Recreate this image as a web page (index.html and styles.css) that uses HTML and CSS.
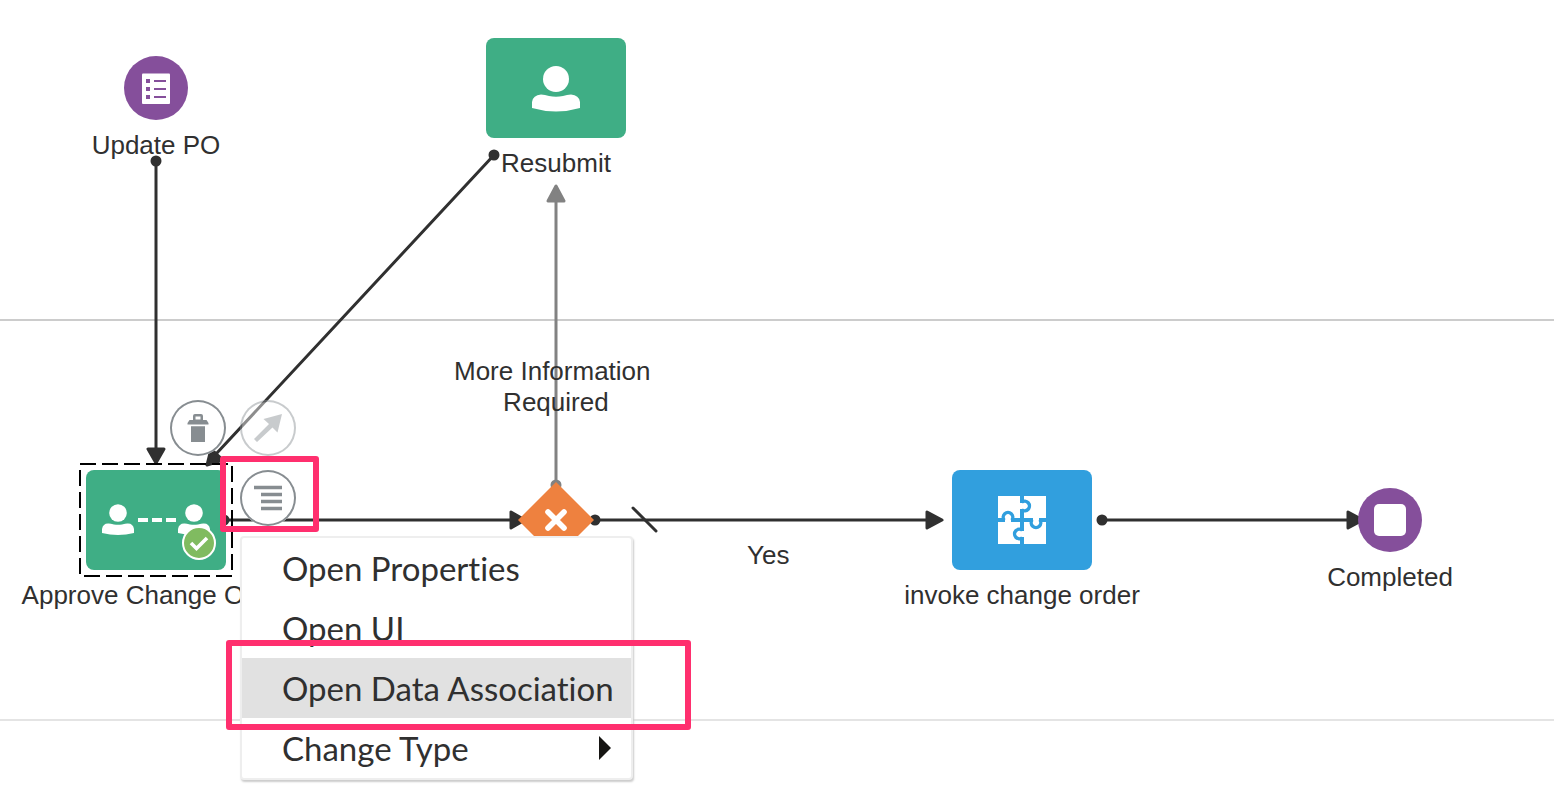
FILE: index.html
```html
<!DOCTYPE html>
<html lang="en">
<head>
<meta charset="utf-8">
<title>Process flow</title>
<link rel="stylesheet" href="styles.css">
</head>
<body>
<main class="canvas">
  <div class="lanes"><div class="lane lane-first"></div><div class="lane lane-second"></div></div>

  <svg class="connectors" aria-hidden="true">
    <g class="flow">
      <path d="M156 161V450M494 155L216 454M224 520H512M595 520H928M1102 520H1350"/>
      <path d="M633 508L656 531"/>
      <g class="ends">
        <circle cx="156" cy="161" r="4"/><circle cx="494" cy="155" r="4"/><circle cx="224" cy="520" r="4"/><circle cx="595" cy="520" r="4"/><circle cx="1102" cy="520" r="4"/>
        <path d="M148 449H164L156 463ZM511 512V528L525 520ZM927 512V528L942 520ZM1348 512V528L1363 520ZM207 465L211 449L223 460Z"/>
      </g>
    </g>
    <g class="flow muted">
      <path d="M556 486V200"/>
      <g class="ends"><circle cx="556" cy="485" r="4"/><path d="M548 201H564L556 186Z"/></g>
    </g>
  </svg>

  <section class="node update">
    <svg class="event" viewBox="0 0 64 64" aria-hidden="true"><circle cx="32" cy="32" r="32" fill="#854f9b"/><rect x="18" y="17.5" width="28" height="30.5" rx="1" fill="#fff"/><path d="M22 23h4v4h-4zM22 31h4v4h-4zM22 39h4v4h-4zM30 24h12v2H30zM30 32h12v2H30zM30 40h12v2H30z" fill="#854f9b"/></svg>
    <span>Update PO</span>
  </section>
  <section class="node resubmit">
    <div class="task"><svg width="48" height="48" viewBox="0 0 48 48" fill="#fff" aria-hidden="true"><circle cx="24" cy="15" r="13"/><path d="M0 44V38Q1 31 9 30.5Q13 30.500 17 32Q24 33.500 31 32Q35 30.500 39 30.500Q47 31 48 38V44Q24 51 0 44Z"/></svg></div>
    <span>Resubmit</span>
  </section>
  <section class="node approve">
    <div class="task"><svg width="140" height="100" viewBox="0 0 140 100" aria-hidden="true"><g fill="#fff"><circle cx="32" cy="43" r="8.8"/><path id="body" d="M16 63V59Q17 53.500 22 53.500Q24 53.300 28 54.500Q32 55 36 54.500Q40 53.300 42 53.500Q47 53.500 48 59V63Q32 67 16 63Z"/><circle cx="108" cy="43" r="8.8"/><use href="#body" x="76"/><path d="M52 48h10v4H52zM66 48h10v4H66zM80 48h10v4H80z"/></g><circle cx="113" cy="73" r="16" fill="#80bb60" stroke="#fff" stroke-width="2"/><path d="M105 73L110.500 78.500L121 68" fill="none" stroke="#fff" stroke-width="3.6"/></svg></div>
    <span>Approve Change Order</span>
  </section>
  <section class="node gateway"><svg width="76" height="76" viewBox="0 0 76 76" aria-hidden="true"><path d="M38 0L76 38L38 76L0 38Z" fill="#ee813f"/><path d="M30 30L46 46M46 30L30 46" stroke="#fff" stroke-width="5.6" stroke-linecap="round"/></svg></section>
  <section class="node invoke">
    <div class="task"><svg width="48" height="48" viewBox="0 0 48 48" aria-hidden="true"><path d="M0 0H48V48H0Z" fill="#fff"/><g fill="none" stroke="#319fde"><g id="arm"><path d="M24 0V7M24 13V24" stroke-width="4"/><path d="M23.700 6.200A4.800 4.800 0 1 1 23.700 13.800" stroke-width="3.4"/></g><use href="#arm" transform="rotate(90 24 24)"/><use href="#arm" transform="rotate(180 24 24)"/><use href="#arm" transform="rotate(270 24 24)"/></g></svg></div>
    <span>invoke change order</span>
  </section>
  <section class="node completed">
    <svg class="event" viewBox="0 0 64 64" aria-hidden="true"><circle cx="32" cy="32" r="32" fill="#854f9b"/><rect x="16" y="16" width="32" height="32" rx="5" fill="#fff"/></svg>
    <span>Completed</span>
  </section>

  <p class="flow-label more">More Information 
Required</p>
  <p class="flow-label yes">Yes</p>

  <svg class="selection" width="154" height="114" viewBox="0 0 154 114" aria-hidden="true"><path d="M1 1H153V113H1Z" fill="none" stroke="#000" stroke-width="2" stroke-dasharray="16 6"/></svg>

  <div class="tools">
    <button class="tool" type="button" aria-label="Delete"><svg viewBox="0 0 56 56"><path d="M17.500 24.500V23L19.500 20H23V16Q23 14 25 14H31Q33 14 33 16V20H36.500L38.500 23V24.500ZM25.500 19.500H30.500V16.500H25.500ZM21 26.300H35V42H21Z" fill="#878d91" fill-rule="evenodd"/></svg></button>
    <button class="tool" type="button" aria-label="Connect" disabled><svg viewBox="0 0 56 56"><path d="M42 14L37.500 32.500L32.500 27.500L17 42L14 39L29 24L23.500 19Z" fill="#878d91"/></svg></button>
    <button class="tool tool-menu" type="button" aria-label="Open menu" aria-expanded="true"><svg viewBox="0 0 56 56"><path d="M14 15.700H42V19.300H14ZM21 22.700H42V26.300H21ZM21 29.700H42V33.300H21ZM21 36.700H42V40.300H21Z" fill="#878d91"/></svg></button>
  </div>

  <nav class="menu" aria-label="Activity">
    <button type="button">Open Properties</button>
    <button type="button">Open UI</button>
    <button type="button" class="active">Open Data Association</button>
    <button type="button">Change Type<svg width="12" height="24" viewBox="0 0 12 24" aria-hidden="true"><path d="M0 0L12 12L0 24Z" fill="#161513"/></svg></button>
  </nav>
  <div class="mark mark-tool"></div>
  <div class="mark mark-item"></div>
</main>
</body>
</html>
```
FILE: styles.css
```css
* { box-sizing: border-box; }
body { margin: 0; background: #fff; color: #303030; font-family: "Liberation Sans", Arial, sans-serif; font-size: 26px; line-height: 30px; }
.canvas { position: relative; min-height: 100vh; overflow: hidden; }
.lane { border-bottom: 2px solid #ccc; }
.lane-first { height: 321px; }
.lane-second { height: 400px; border-color: #e4e4e4; }

.connectors { position: absolute; inset: 0; width: 100%; height: 100%; }
.flow { fill: none; stroke: #303030; stroke-width: 3px; stroke-linecap: round; }
.muted { stroke: #828282; }
.ends { fill: #303030; stroke-width: 3px; stroke-linejoin: round; }
.muted .ends { fill: #828282; }

.node { position: absolute; display: flex; flex-direction: column; align-items: center; gap: 10px; width: 280px; white-space: nowrap; }
.event { width: 64px; height: 64px; }
.task { display: flex; align-items: center; justify-content: center; width: 140px; height: 100px; border-radius: 8px; background: #3fae85; }
.update { left: 16px; top: 56px; }
.resubmit { left: 416px; top: 38px; }
.approve { left: 16px; top: 470px; }
.gateway { left: 416px; top: 482px; }
.invoke { left: 882px; top: 470px; }
.invoke .task { background: #319fde; }
.completed { left: 1250px; top: 488px; }

.flow-label { position: absolute; margin: 0; line-height: 31px; text-align: center; white-space: pre; }
.more { left: 454px; top: 356px; }
.yes { left: 747px; top: 540px; }
.selection { position: absolute; left: 79px; top: 463px; }

.tools { position: absolute; left: 170px; top: 400px; display: grid; grid-template-columns: 56px 56px; gap: 14px; }
.tool { width: 56px; height: 56px; padding: 0; border: 0; border-radius: 50%; background: #fff; box-shadow: inset 0 0 0 2px #878d91; }
.tool svg { display: block; width: 56px; height: 56px; }
.tool:disabled { opacity: 0.45; }
.tool-menu { grid-column: 2; }

.menu { position: absolute; left: 240px; top: 536px; display: flex; flex-direction: column; width: 393px; border: 2px solid #eee; border-radius: 4px; background: #fff; box-shadow: 1px 2px 2px #ccc; }
.menu button { display: flex; align-items: center; justify-content: space-between; height: 60px; padding: 0 20px 0 40px; border: 0; background: none; color: #303030; font-family: Lato, "Noto Sans", sans-serif; font-size: 33px; line-height: 40px; font-variant-ligatures: none; white-space: nowrap; }
.menu .active { background: #e1e1e1; }
.mark { position: absolute; border: 6px solid #ff2f6e; border-radius: 3px; }
.mark-tool { left: 220px; top: 456px; width: 99px; height: 76px; }
.mark-item { left: 226px; top: 640px; width: 465px; height: 90px; }
```
